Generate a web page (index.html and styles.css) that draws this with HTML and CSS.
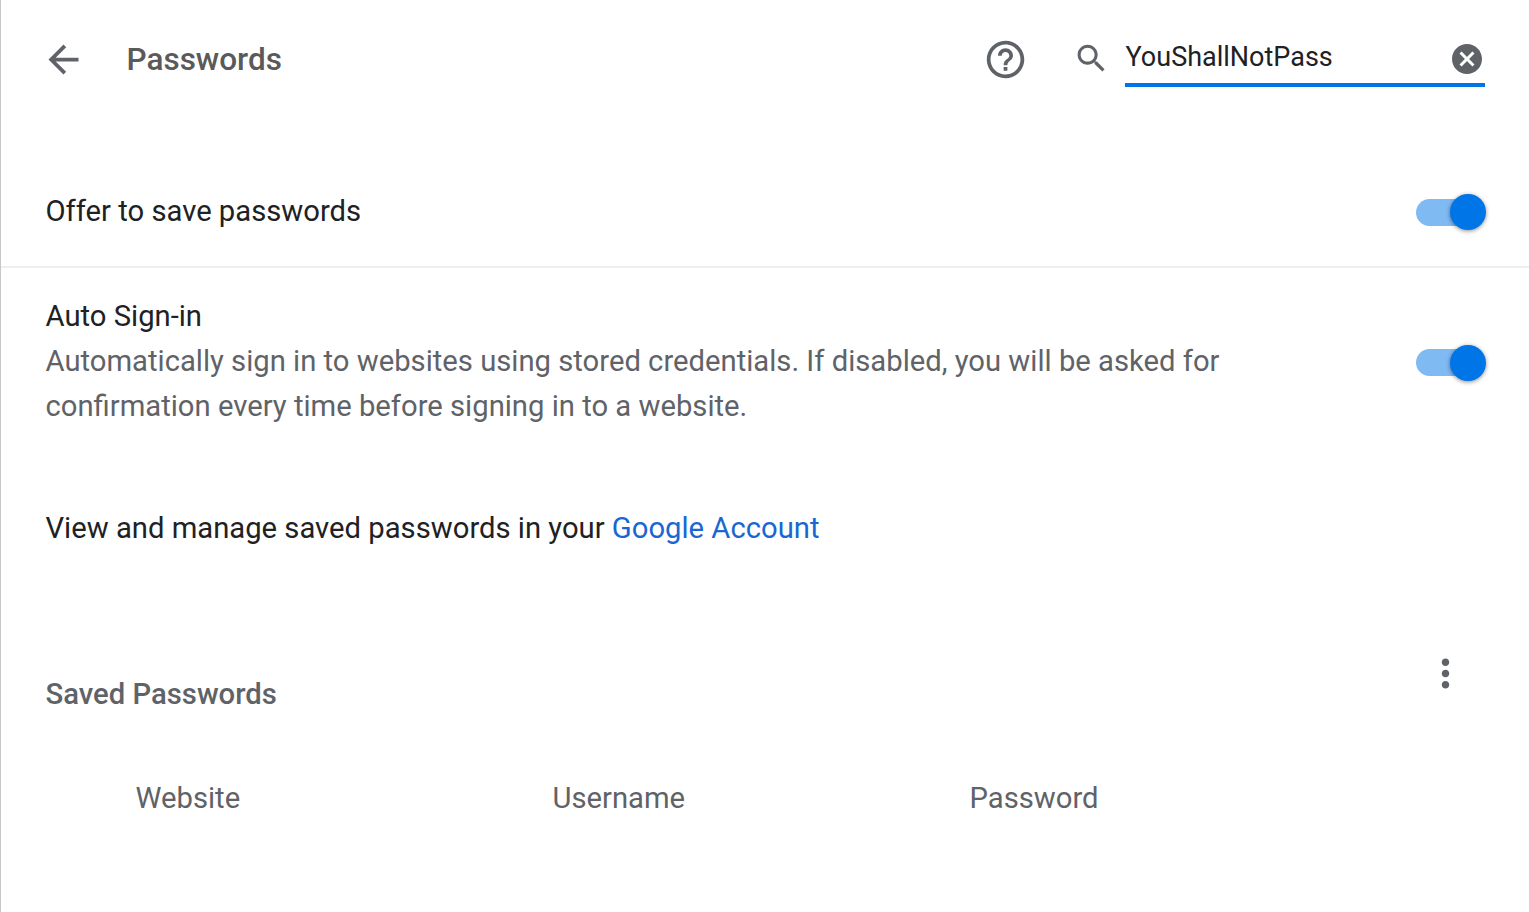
FILE: index.html
```html
<!DOCTYPE html>
<html lang="en">
<head>
<meta charset="utf-8">
<title>Passwords</title>
<link rel="stylesheet" href="styles.css">
</head>
<body>
<main class="page">
  <header class="toolbar">
    <svg class="back" viewBox="0 0 24 24"><path d="M20 11H7.830l5.590-5.590L12 4l-8 8 8 8 1.410-1.410L7.830 13H20v-2z"/></svg>
    <h1 class="title">Passwords</h1>
    <svg class="help" viewBox="0 0 24 24"><path d="M11 18h2v-2h-2v2zm1-16C6.480 2 2 6.480 2 12s4.480 10 10 10 10-4.480 10-10S17.520 2 12 2zm0 18c-4.410 0-8-3.590-8-8s3.590-8 8-8 8 3.590 8 8-3.590 8-8 8zm0-14c-2.210 0-4 1.790-4 4h2c0-1.100.9-2 2-2s2 .9 2 2c0 2-3 1.750-3 5h2c0-2.250 3-2.500 3-5 0-2.210-1.790-4-4-4z"/></svg>
    <svg class="magnifier" viewBox="0 0 24 24"><path d="M15.500 14h-.79l-.28-.27C15.410 12.590 16 11.110 16 9.500 16 5.910 13.090 3 9.500 3S3 5.910 3 9.500 5.910 16 9.500 16c1.610 0 3.090-.59 4.230-1.570l.27.28v.79l5 4.990L20.490 19l-4.990-5zm-6 0C7.010 14 5 11.990 5 9.500S7.010 5 9.500 5 14 7.010 14 9.500 11.990 14 9.500 14z"/></svg>
    <div class="search">
      <span class="query">YouShallNotPass</span>
      <svg class="clear" viewBox="0 0 24 24"><path d="M12 2C6.470 2 2 6.470 2 12s4.470 10 10 10 10-4.470 10-10S17.530 2 12 2zm5 13.590L15.590 17 12 13.410 8.410 17 7 15.590 10.590 12 7 8.410 8.410 7 12 10.590 15.590 7 17 8.410 13.410 12 17 15.590z"/></svg>
    </div>
  </header>
  <section class="row offer">
    <span>Offer to save passwords</span>
    <span class="toggle"><span class="knob"></span></span>
  </section>
  <section class="row auto">
    <div class="copy">
      <div>Auto Sign-in</div>
      <div class="secondary">Automatically sign in to websites using stored credentials. If disabled, you will be asked for<br>confirmation every time before signing in to a website.</div>
    </div>
    <span class="toggle"><span class="knob"></span></span>
  </section>
  <p class="manage">View and manage saved passwords in your <a class="link">Google Account</a></p>
  <section class="saved">
    <h2 class="heading">Saved Passwords</h2>
    <svg class="more" viewBox="0 0 24 24"><path d="M12 8c1.100 0 2-.9 2-2s-.9-2-2-2-2 .9-2 2 .9 2 2 2zm0 2c-1.100 0-2 .9-2 2s.9 2 2 2 2-.9 2-2-.9-2-2-2zm0 6c-1.100 0-2 .9-2 2s.9 2 2 2 2-.9 2-2-.9-2-2-2z"/></svg>
  </section>
  <div class="columns"><span>Website</span><span>Username</span><span>Password</span></div>
</main>
</body>
</html>
```
FILE: styles.css
```css
* { box-sizing: border-box; }
body { margin: 0; background: #fff; }
.page {
  height: 912px;
  border-left: 1px solid #c8c8c8;
  font: 400 29.22px/45px Roboto, sans-serif;
  color: #202124;
  overflow: hidden;
}
svg { display: block; flex: none; fill: #5f6368; }
.toolbar { display: flex; align-items: center; height: 118px; padding: 0 44px 0 40px; }
.back { width: 45px; height: 45px; }
.title { margin: 0 auto 0 40.5px; font-size: 31.5px; font-weight: 500; color: #5a5a5a; }
.help { width: 45px; height: 45px; }
.magnifier { width: 37px; height: 37px; margin: 0 0 2px 45px; }
.search {
  display: flex;
  align-items: center;
  justify-content: space-between;
  width: 360px;
  height: 56px;
  margin-left: 15px;
  border-bottom: 4px solid #0075e8;
}
.query { padding-left: .5px; font-size: 27px; }
.clear { width: 36px; height: 36px; margin-top: 4px; }
.row { display: flex; align-items: center; justify-content: space-between; padding: 0 44px 0 44.5px; }
.offer { height: 150px; padding-top: 38px; border-bottom: 2px solid #eee; }
.offer .toggle { margin-top: 3px; }
.auto { height: 188px; }
.auto .toggle { margin-top: 1px; }
.auto .knob { top: -4px; }
.copy { margin-bottom: 2px; }
.secondary { color: #5f6368; }
.toggle { position: relative; width: 60px; height: 27px; margin-right: 9px; border-radius: 14px; background: #80baf3; }
.knob {
  position: absolute;
  right: -10px;
  top: -5px;
  width: 36px;
  height: 36px;
  border-radius: 50%;
  background: #0075e8;
  box-shadow: 0 1px 4px rgba(0, 0, 0, .45);
}
.manage { margin: 50px 44.5px 0; }
.link { color: #1967d2; }
.saved { display: flex; justify-content: space-between; padding: 100px 61px 0 44.5px; }
.heading { margin: 21px 0 0; font-size: 29.25px; font-weight: 500; color: #5f6368; }
.more { width: 45px; height: 45px; }
.columns { display: grid; grid-template-columns: 417px 417px 1fr; padding: 59px 0 0 134.5px; color: #5f6368; }
```
